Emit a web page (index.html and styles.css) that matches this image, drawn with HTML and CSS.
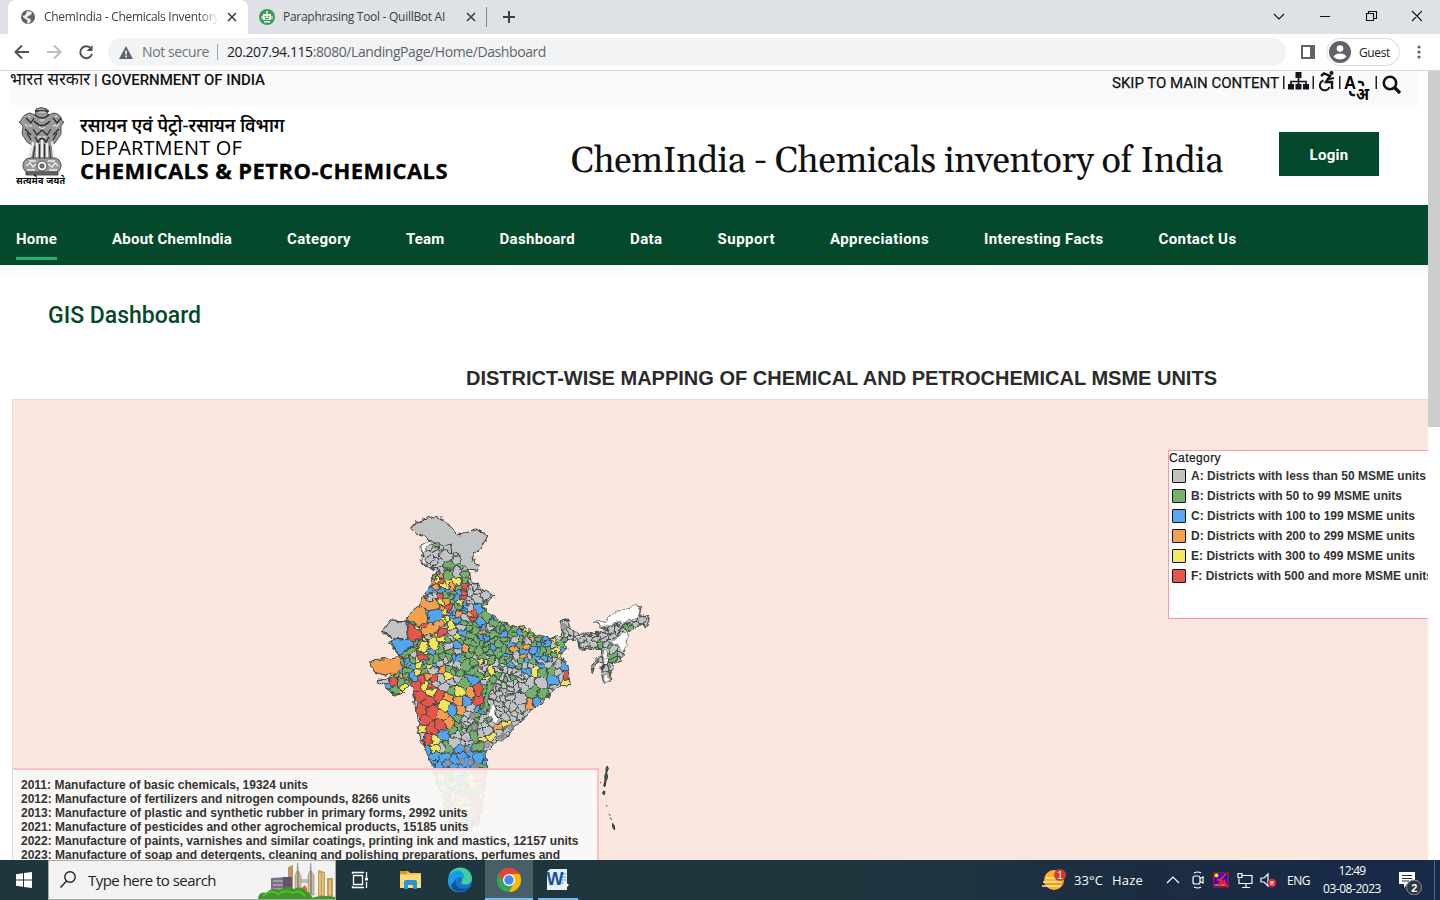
FILE: index.html
```html
<!DOCTYPE html>
<html lang="en">
<head>
<meta charset="utf-8">
<title>ChemIndia - Chemicals Inventory</title>
<link rel="stylesheet" href="styles.css">
</head>
<body>
<div class="window">
  <div class="tabs">
    <div class="tab active">
      <svg class="fav" width="16" height="16" viewBox="0 0 16 16"><circle cx="8" cy="8" r="7" fill="#5f6368"/><path d="M7 2l5 1-1 3-3 1-1 2 3 .5 1 2-2 3-2-.3.5-3L4 9 2 6.500l2 .5 2-2z" fill="#fff" opacity=".9"/></svg>
      <span class="fade" data-w="175">ChemIndia - Chemicals Inventory</span>
      <svg class="close" width="10" height="10" viewBox="0 0 10 10"><path d="M1 1l8 8M9 1l-8 8" stroke="#3c4043" stroke-width="1.600"/></svg>
    </div>
    <div class="tab">
      <svg class="fav" width="16" height="16" viewBox="0 0 16 16"><circle cx="8" cy="8" r="8" fill="#3f9a55"/><path d="M7.300 2h1.400v3H7.300zM4 5h8v6H4zM2.500 7h1v3h-1zM12.500 7h1v3h-1zM5 12h6v1.500H5z" fill="#fff"/><path d="M5.500 7.500h1.800M8.700 7.500h1.800M6 9.700h4" stroke="#3f9a55" stroke-width="1.300"/></svg>
      <span data-w="162">Paraphrasing Tool - QuillBot AI</span>
      <svg class="close" width="10" height="10" viewBox="0 0 10 10"><path d="M1 1l8 8M9 1l-8 8" stroke="#3c4043" stroke-width="1.600"/></svg>
    </div>
    <i class="tabsep"></i>
    <svg class="plus" width="12" height="12" viewBox="0 0 12 12"><path d="M6 0v12M0 6h12" stroke="#3c4043" stroke-width="2"/></svg>
    <svg class="winctl" width="150" height="14" viewBox="1272 8 150 14" fill="none" stroke="#111" stroke-width="1.100"><path d="M1274 12l5 5 5-5M1320 14.500h10M1366.500 11.500h7v7h-7zM1368.500 11.500v-2h8v7h-3M1412 9l10 10M1422 9l-10 10"/></svg>
  </div>
  <div class="toolbar">
    <svg width="100" height="24" viewBox="0 40 100 24" fill="none" stroke="#505458" stroke-width="2"><path d="M29 52H16M22 45.500L15.500 52l6.500 6.500"/><path d="M47 52h13M54 45.500l6.500 6.500-6.500 6.500" stroke="#bcbec1"/><path d="M91 48.500A6 6 0 1 0 92 54"/><path d="M92.500 45v6h-6z" fill="#505458" stroke="none"/></svg>
    <div class="omni">
      <svg width="14" height="13" viewBox="0 0 14 13"><path d="M7 0l7 13H0z" fill="#5f6368"/><path d="M7 4.500v4M7 9.500v2" stroke="#fff" stroke-width="1.500"/></svg>
      <span class="notsec" data-w="67">Not secure</span><i></i>
      <span class="url" data-w="319"><b>20.207.94.115</b>:8080/LandingPage/Home/Dashboard</span>
    </div>
    <svg class="side" width="14" height="14" viewBox="0 0 14 14"><path d="M1 1h12v12H1z" fill="#fff" stroke="#5f6368" stroke-width="2"/><path d="M9 0h5v14H9z" fill="#5f6368"/></svg>
    <div class="guest"><svg width="22" height="22" viewBox="0 0 22 22"><circle cx="11" cy="11" r="11" fill="#5f6368"/><circle cx="11" cy="7.500" r="3.300" fill="#fff"/><path d="M4.500 15.500c2-4 11-4 13 0-3 4-10 4-13 0z" fill="#fff"/></svg><span data-w="31">Guest</span></div>
    <svg class="dots" width="4" height="14" viewBox="0 0 4 14" fill="#5f6368"><circle cx="2" cy="2" r="1.600"/><circle cx="2" cy="7" r="1.600"/><circle cx="2" cy="12" r="1.600"/></svg>
  </div>
  <div class="viewport">
    <div class="page">
      <div class="govbar">
        <span class="gov"><span class="hi">भारत सरकार</span><span data-w="171">| GOVERNMENT OF INDIA</span></span>
        <span class="skip" data-w="167">SKIP TO MAIN CONTENT</span>
        <svg class="tools" width="122" height="34" viewBox="1280 71 122 34">
          <g fill="#222"><path d="M1283 76h1.500v13h-1.500zM1312.500 76h1.500v13h-1.500zM1339 76h1.500v13h-1.500zM1375.500 76h1.500v13h-1.500z"/></g>
          <g fill="#151522"><path d="M1295.500 72h6v6h-6zM1288 84h6v5.500h-6zM1295.500 84h6v5.500h-6zM1303 84h6v5.500h-6z"/><path d="M1291 85v-3.500h15V85M1298.500 78v7" fill="none" stroke="#151522" stroke-width="1.700"/></g>
          <g fill="none" stroke="#151522" stroke-width="2"><path d="M1321 76l3-2.500 6 2.500-4 6h6v7" stroke-width="2.400"/><path d="M1323.500 80.500a5 5 0 1 0 6 6.500M1329 79l5-1"/><circle cx="1331.500" cy="73" r="2" fill="#151522" stroke="none"/></g>
          <text x="1344" y="89" class="tra" textLength="12" lengthAdjust="spacingAndGlyphs">A</text><text x="1356" y="100" class="trh" textLength="13" lengthAdjust="spacingAndGlyphs">अ</text>
          <path d="M1358 82q6-1 5 4M1350 91q0 5 5 4" fill="none" stroke="#111" stroke-width="2.400"/>
          <circle cx="1390" cy="83" r="6.200" fill="none" stroke="#111" stroke-width="2.600"/><path d="M1394.500 87.500l5.500 5.500" stroke="#111" stroke-width="3.200"/>
        </svg>
      </div>
      <header class="brand">
        <svg class="emblem" width="54" height="82" viewBox="0 0 54 82">
          <g fill="#9a9a9a" stroke="#444" stroke-width=".9">
            <path d="M6 15q2-7 9-8l5 2 1-6q5-3 11 0l1 6 6-2q7 1 8 8l2 1-3 4 0 8-6 9-4 2 3 15H14l3-15-5-3-5-8 1-8-4-4z"/>
            <path d="M18 36l-3 16M22 37v15M27 34v18M32 37v15M37 36l2 16" stroke="#eee" stroke-width="2.200"/>
            <path d="M20 40l-2 12M24.500 38v14M29.500 38v14M34.500 40l1 12" stroke="#333" stroke-width="1.200"/>
            <path d="M20 5h14M20 9q7 6 14 0M19 15q8 9 16 0M11 12l5 5 3-5M38 12l4 5 4-5M10 23l6 6M44 23l-6 6M18 23l4 6 5-5 5 5 4-6M22 17l2 2m8-2l-2 2M12 27l4 7M42 27l-4 7M20 31l3 5 4-5 4 5 3-5" fill="none" stroke="#2a2a2a" stroke-width="1.300"/>
            <path d="M13 10l2 1m25 0l2-1M24 6h6M25 14h4M14 19l3 1m21 0l3-1M23 31h8M10 18l3 3m28 0l3-3M24 21l3 2 3-2" stroke="#fff" fill="none"/>
            <rect x="8" y="52" width="38" height="15" rx="7"/><path d="M11 66h32v3H11z" fill="#666"/>
            <circle cx="27" cy="60" r="5" fill="#eee"/><circle cx="27" cy="60" r="2" fill="#777"/><path d="M11 60l4-3 3 4 3-3m12 0l4 3 3-4 3 3M12 64h8m14 0h8M14 55h7m12 0h7" fill="none" stroke="#eee" stroke-width="1.300"/>
          </g>
          <text x="1" y="78" class="motto" textLength="49">सत्यमेव जयते</text>
        </svg>
        <div class="dept"><div class="d1">रसायन एवं पेट्रो-रसायन विभाग</div><div class="d2"><span data-w="162">DEPARTMENT OF</span></div><div class="d3"><span data-w="368">CHEMICALS &amp; PETRO-CHEMICALS</span></div></div>
        <div class="title"><span data-w="652">ChemIndia - Chemicals inventory of India</span></div>
        <div class="login"><span data-w="39">Login</span></div>
      </header>
      <nav class="nav"><span class="on" data-w="41">Home</span><span data-w="120">About ChemIndia</span><span data-w="64">Category</span><span data-w="38.500">Team</span><span data-w="75.500">Dashboard</span><span data-w="32.500">Data</span><span data-w="57.500">Support</span><span data-w="99">Appreciations</span><span data-w="119.500">Interesting Facts</span><span data-w="78">Contact Us</span></nav>
      <h2 class="gis"><span data-w="153">GIS Dashboard</span></h2>
      <h3 class="maptitle"><span data-w="751">DISTRICT-WISE MAPPING OF CHEMICAL AND PETROCHEMICAL MSME UNITS</span></h3>
      <div class="mapbox">
        <svg class="map" id="map" width="300" height="360" viewBox="-15 -15 900 1080"></svg>
        <div class="legend">
          <div class="cat"><span data-w="52">Category</span></div>
          <div class="row"><i class="a"></i><span data-w="235">A: Districts with less than 50 MSME units</span></div>
          <div class="row"><i class="b"></i><span data-w="211">B: Districts with 50 to 99 MSME units</span></div>
          <div class="row"><i class="c"></i><span data-w="224">C: Districts with 100 to 199 MSME units</span></div>
          <div class="row"><i class="d"></i><span data-w="224">D: Districts with 200 to 299 MSME units</span></div>
          <div class="row"><i class="e"></i><span data-w="224">E: Districts with 300 to 499 MSME units</span></div>
          <div class="row"><i class="f"></i><span data-w="242">F: Districts with 500 and more MSME units</span></div>
        </div>
        <div class="info">
          <div><span data-w="287">2011: Manufacture of basic chemicals, 19324 units</span></div>
          <div><span data-w="389.500">2012: Manufacture of fertilizers and nitrogen compounds, 8266 units</span></div>
          <div><span data-w="446.500">2013: Manufacture of plastic and synthetic rubber in primary forms, 2992 units</span></div>
          <div><span data-w="447.500">2021: Manufacture of pesticides and other agrochemical products, 15185 units</span></div>
          <div><span data-w="557.500">2022: Manufacture of paints, varnishes and similar coatings, printing ink and mastics, 12157 units</span></div>
          <div><span data-w="539">2023: Manufacture of soap and detergents, cleaning and polishing preparations, perfumes and</span></div>
        </div>
      </div>
    </div>
    <div class="scroll"><div></div></div>
  </div>
  <div class="taskbar">
    <div class="start"><svg width="16" height="16" viewBox="0 0 16 16" fill="#fff"><path d="M0 2.300l7-1v6.200H0zM8 1.100L16 0v7.500H8zM0 8.500h7v6.200l-7-1zM8 8.500h8V16l-8-1.100z"/></svg></div>
    <div class="search">
      <svg width="16" height="18" viewBox="0 0 16 18" fill="none" stroke="#222" stroke-width="1.400"><circle cx="10" cy="6" r="5.200"/><path d="M6.500 10L.5 16.500"/></svg>
      <span data-w="128">Type here to search</span>
      <svg class="city" width="78" height="38" viewBox="0 0 78 38">
        <path d="M13 17l17-1v20H13z" fill="#777080"/><path d="M15 20h13M15 24h13M15 28h13" stroke="#b5a6af" stroke-width="1.500"/><path d="M30 6l5-2v30h-5z" fill="#bd9562"/><path d="M25 16h9v18h-9z" fill="#655268"/>
        <path d="M37 34V15l2-5 .7-8 .7 8 2.600 5v19zM50 34V15l2-5 .7-8 .7 8 2.600 5v19z" fill="#c8bda5" stroke="#8d8272" stroke-width=".6"/><path d="M40 10v23M53 10v23" stroke="#776d67" stroke-width="1.200"/><path d="M43 19h7M43 21h7" stroke="#8d8985" fill="none"/>
        <path d="M60 9l7 2v25h-7zM69 17h6v20h-6z" fill="#c99f55"/><path d="M62 12v22M65 12v22M72 19v15" stroke="#fae0a0"/><path d="M44 27l2.500-3 2.500 3v8h-5z" fill="#e36631"/>
        <path d="M0 38q1-8 8-6 6-6 14-3 7-6 14-1 8-4 12 3 3-1 5 3l2 4z" fill="#399a24"/><path d="M50 38q12-5 27-2v2z" fill="#399a24"/><path d="M5 35q8-7 15-2 8-5 15-1 7-4 12 3" stroke="#5fb43a" stroke-width="2" fill="none"/>
      </svg>
    </div>
    <svg class="apps" width="242" height="40" viewBox="336 0 242 40">
      <g fill="none" stroke="#fff" stroke-width="1.300"><path d="M353.500 15.500h9v9h-9zM352.500 14v-2M352 12.500h12M352.500 28v-2M352 27.500h12M366.500 12v5M366.500 22v6"/><path d="M365 17.500h3v3h-3z" fill="#fff" stroke="none"/></g>
      <path d="M400 11h8l2 2h11v15h-21z" fill="#f7c64a"/><path d="M400 11h7v3h-7z" fill="#d99b1c"/><path d="M400 15h21v13h-21z" fill="#ffd97a"/><path d="M404 29v-7q0-2 2-2h9q2 0 2 2v7h-4v-4h-5v4z" fill="#2c94dc"/>
      <circle cx="460" cy="20" r="12" fill="#1577cc"/><path d="M449 16c2-11 21-12 23 2 0 7-8 8-11 5 5-7-4-11-12-7z" fill="#42cfa0"/><path d="M449 16c5-9 17-6 15 3-5-5-10 0-8 6 2 4 8 6 13 2-6 9-22 6-21-7z" fill="#1b9be1"/><path d="M456 19c-2 8 5 12 13 8-5 7-17 6-18-2z" fill="#124f9c"/>
      <path d="M485 0h48v40h-48z" fill="#495e67"/><path d="M485 38h48v2h-48zM538 38h40v2h-40z" fill="#76b9ed"/>
      <circle cx="509" cy="20" r="12" fill="#34a853"/><path d="M509 14h10.400A12 12 0 0 1 509 32l5-9z" fill="#fbbc05"/><path d="M498.600 14A12 12 0 0 1 519.400 14H509a6 6 0 0 0-5 9z" fill="#ea4335"/><circle cx="509" cy="20" r="6" fill="#fff"/><circle cx="509" cy="20" r="4.700" fill="#4285f4"/>
      <path d="M550 9h17v21h-20V12z" fill="#e8f0fc"/><path d="M561 14h5M561 17h5M561 20h5M561 23h5" stroke="#5b8fd8"/><path d="M563 20l6 5-4 4z" fill="#fff"/><text x="546.500" y="25" class="word" textLength="17">W</text>
    </svg>
    <div class="tray">
      <svg width="26" height="22" viewBox="0 0 26 22"><circle cx="13" cy="11" r="10" fill="#ffb321"/><path d="M3 14h18l-2 4H6z" fill="#f09a1a"/><path d="M2 13h18M1 17h19M5 9h10" stroke="#ffe9b4" stroke-width="1.700"/><circle cx="19" cy="6" r="6" fill="#d13b2b"/><text x="16.300" y="9.500" class="one">1</text></svg>
      <span class="temp" data-w="29">33°C</span><span class="haze" data-w="31">Haze</span>
      <svg class="ti" width="110" height="22" viewBox="1166 869 110 22" fill="none" stroke="#fff" stroke-width="1.200"><path d="M1167 883l6-6 6 6"/><rect x="1193" y="876" width="7" height="8" rx="2"/><path d="M1200 878.500l3-1.500v6l-3-1.500M1194 873q4-2 7 0M1194 887q4 2 7 0"/><path d="M1214 873h14v14h-14z" fill="#10e" stroke="#e11"/><path d="M1215 884h12v2h-12z" fill="#888" stroke="none"/><circle cx="1216.500" cy="875.500" r="2" fill="#fe0" stroke="none"/><path d="M1226 874l-5 5-4 1 5 1-4 4 5-2 3 2-2-5" stroke="#f22" stroke-width="2"/><path d="M1241 875.500h11v8h-13v-5M1246 884v3M1242 887.500h8M1238 873.500h4v4h-4z"/><path d="M1261 878h3l4-4v12l-4-4h-3z"/><circle cx="1272" cy="883" r="4.300" fill="#db2f3e" stroke="none"/><path d="M1270.500 881.500l3 3m0-3l-3 3"/></svg>
      <span class="eng" data-w="23">ENG</span>
      <div class="clock"><span data-w="27">12:49</span><br><span data-w="58">03-08-2023</span></div>
      <svg class="note" width="26" height="26" viewBox="0 0 26 26"><path d="M1 3h16v12H9l-3 4v-4H1z" fill="#fff"/><path d="M4 6.500h10M4 9.500h10M4 12h7" stroke="#1b2d40"/><circle cx="16" cy="18.500" r="7.500" fill="#2f3740" stroke="#8d959b"/><text x="13.200" y="23" class="two">2</text></svg>
      <i class="peek"></i>
    </div>
  </div>
</div>
<script src="map.js"></script>
</body>
</html>
```
FILE: styles.css
```css
*{box-sizing:border-box}
body{margin:0;font-family:"Liberation Sans",Arial,sans-serif;color:#222}
svg{flex:none;display:block}
span{white-space:nowrap}
.window{width:1440px;height:900px;display:flex;flex-direction:column;overflow:hidden;background:#fff}
.tabs{height:34px;background:#dee1e6;display:flex;align-items:center;flex:none;font:12px/34px "Open Sans",sans-serif;color:#3c4043;padding-left:8px}
.tab{display:flex;align-items:center;height:34px;width:240px;padding-left:12px}
.tab.active{background:#fff;border-radius:8px 8px 0 0}
.fav{margin-right:8px}
.tab:not(.active) .fav{margin-left:-1px}
.fade{-webkit-mask-image:linear-gradient(90deg,#000 88%,transparent);mask-image:linear-gradient(90deg,#000 88%,transparent)}
.close{margin-left:auto;margin-right:11px}
.tab:not(.active) .close{margin-right:12px}
.tabsep{width:1px;height:20px;background:#808388;margin-left:-2px}
.plus{margin-left:16px}
.winctl{margin-left:auto;margin-right:18px}
.toolbar{height:37px;flex:none;display:flex;align-items:center;border-bottom:1px solid #d4d6d9;font-family:"Open Sans",sans-serif}
.omni{margin-left:8px;width:1178px;height:28px;border-radius:14px;background:#f1f3f4;display:flex;align-items:center;padding-left:11px;font-size:14px;line-height:28px;color:#5f6368}
.omni span{height:28px}
.omni b{font-weight:400;color:#202124}
.omni .notsec{margin-left:9px;color:#707478}
.omni i{width:1px;height:16px;background:#9aa0a6;margin:0 9px 0 8px}
.side{margin-left:15px}
.guest{margin-left:11px;width:74px;height:28px;border:1px solid #dadce0;border-radius:14px;display:flex;align-items:center;padding-left:2px;font-size:12px;gap:8px}
.dots{margin-left:17px}
.viewport{height:789px;flex:none;display:flex;overflow:hidden}
.page{width:1428px;overflow:hidden;font-family:Roboto,sans-serif}
.scroll{width:12px;background:#fff}
.scroll div{height:356px;background:#cdcdcd}
.govbar{margin:0 10px;height:34px;background:#f9f9f9;display:flex;align-items:flex-start;color:#111;font-weight:500;font-size:15px;line-height:18px}
.hi{font-family:"Noto Sans Devanagari","Noto Sans",sans-serif;font-weight:400;font-size:17px;line-height:20px;width:84px;height:20px}
.gov{width:1102px;display:flex}
.skip{padding-top:3px;width:168px;font-weight:400;-webkit-text-stroke:.25px #111}
.tra{font:bold 19px "Liberation Sans",sans-serif}
.trh{font:bold 17px "Noto Sans Devanagari","Noto Sans",sans-serif}
.brand{height:100px;display:flex;color:#111}
.emblem{margin:1px 0 0 15px}
.motto{font:bold 9px "Noto Sans Devanagari","Noto Sans",sans-serif}
.dept{margin-left:11px;width:490px;padding-top:9px;font-family:"Open Sans","Noto Sans",sans-serif;color:#000}
.d1{font-size:18.400px;line-height:22px;font-weight:500;-webkit-text-stroke:.2px #000}
.d2{font-size:20px;line-height:24px}
.d3{font-size:22px;line-height:20px;font-weight:700;-webkit-text-stroke:.3px #000}
.title{width:709px;font:36px/40px Gelasio,Georgia,serif;padding:37px 0 0 1px}
.login{margin-top:27px;width:100px;height:44px;background:#04492b;color:#fff;font-weight:700;font-size:15px;line-height:46px;text-align:center}
.nav{height:60px;background:#04492b;color:#fff;display:flex;gap:55px;padding:18px 16px 0;font-size:15px;font-weight:700;line-height:33px;box-shadow:0 5px 0 #f9fafa,0 7px 8px #00000008}
.nav span{height:37px}
.nav .on{border-bottom:3px solid #19b96b}
.gis{margin:32px 0 0 48px;font-size:23px;line-height:37px;height:36px;font-weight:500;color:#04492b}
.maptitle{margin:29px 0 0 466px;font:bold 20px/32px "Liberation Sans",sans-serif;height:37px;color:#2b2b2b}
.mapbox{margin-left:12px;width:1500px;height:480px;border:1px solid #dedede;background:#fae8e0;display:grid;grid-template-columns:1155px 1fr;grid-template-rows:480px;position:relative;font:bold 12px "Liberation Sans",sans-serif;color:#333}
.map{margin:101px 0 0 342px}
.legend{margin-top:50px;width:340px;height:169px;border:1px solid #ff98a2;background:#fff}
.cat{line-height:15px;height:15px;font-weight:400;color:#222;-webkit-text-stroke:.25px #222}
.row{display:flex;align-items:center;height:20px;padding-left:3px;gap:5px}
.row i{width:14px;height:14px;border:1px solid #111;border-radius:1px}
.a{background:#c2c3c1}.b{background:#79b16e}.c{background:#58a7ef}.d{background:#f5a04f}.e{background:#f3e661}.f{background:#e6564b}
.info{position:absolute;left:0;top:368px;width:586px;height:115px;border:solid #ffbfc2;border-width:2px 2px 0 0;background:rgba(250,250,247,.91);padding:8px;line-height:14px}
.taskbar{height:40px;flex:none;display:flex;background:linear-gradient(90deg,#1f363e,#20363f 60%,#1b2c42 80%,#18294a);font-family:"Open Sans",sans-serif;color:#fff;font-size:13px}
.start{width:48px;display:grid;place-items:center}
.search{width:288px;background:#f2f2f2;border:1px solid #aaa;display:flex;align-items:center;padding-left:11px;color:#222;font-size:15px;gap:12px}
.city{margin-left:auto;margin-right:-1px}
.tray{margin-left:auto;display:flex;align-items:center;width:399px}
.temp{margin-left:7px}.haze{margin-left:9px}
.ti{margin-left:23px}.eng{font-size:12px;margin-left:11px}
.clock{font-size:12px;line-height:18px;text-align:center;margin-left:13px;width:58px}
.note{margin-left:17px;margin-top:4px}
.peek{width:1px;height:40px;background:#5d6a78;margin-left:10px}
.one{font:10px sans-serif;fill:#fff}.two{font:bold 11px "Liberation Sans",sans-serif;fill:#fff}.word{font:bold 18px "Liberation Sans",sans-serif;fill:#17519f}
```
FILE: map.js
```javascript
// Spread each label's characters over its column width.
document.querySelectorAll('[data-w]').forEach(e => {
  const w = +e.dataset.w, range = document.createRange();
  range.selectNodeContents(e);
  const n = e.textContent.length, nat = range.getBoundingClientRect().width;
  e.style.letterSpacing = ((w - nat) / n) + 'px';
});

const P = {A:'#c2c3c5',B:'#73b06c',C:'#54a5ee',D:'#f5a04f',E:'#f3e65f',F:'#e6564b',W:'#fffdfb'};
let s = 7321;
const rnd = () => (s = (s * 16807) % 2147483647) / 2147483647;

const land = [[152,70],[165,52],[190,42],[218,35],[250,47],[275,75],[300,93],[345,72],[380,92],[362,128],[335,148],[340,170],[355,185],[348,198],[325,195],[330,228],[345,238],[375,256],[398,268],[382,298],[365,300],[375,322],[400,335],[430,352],[465,365],[490,362],[510,382],[550,395],[602,392],[600,348],[620,342],[626,372],[660,385],[710,382],[745,375],[715,367],[700,352],[730,348],[750,330],[780,315],[810,305],[828,298],[842,310],[835,325],[865,340],[855,370],[845,360],[820,370],[802,385],[798,420],[785,440],[780,470],[765,475],[755,470],[750,505],[745,532],[728,532],[722,505],[725,475],[710,470],[695,503],[688,485],[692,475],[720,450],[725,430],[655,432],[650,410],[618,403],[610,420],[625,430],[605,440],[600,455],[615,470],[622,500],[628,542],[605,542],[580,550],[565,570],[545,595],[510,615],[490,640],[460,665],[435,700],[400,715],[375,735],[378,795],[365,918],[346,962],[297,999],[273,968],[237,858],[215,790],[205,760],[180,710],[165,625],[160,575],[150,535],[145,515],[143,545],[130,560],[105,573],[80,555],[55,530],[52,522],[75,524],[92,512],[105,505],[70,510],[40,500],[28,477],[45,463],[105,460],[115,450],[85,415],[100,400],[75,392],[65,380],[90,345],[135,348],[140,330],[175,300],[185,275],[195,275],[195,260],[212,240],[212,215],[235,200],[210,190],[185,180],[180,120],[205,108],[185,95],[165,80]];

// Districts large enough to carry their own outline.
const shapes = [
  ['A',[[152,70],[165,52],[190,42],[218,35],[250,47],[275,75],[300,93],[345,72],[380,92],[362,128],[335,148],[340,170],[355,185],[348,198],[325,195],[302,180],[296,150],[272,142],[270,118],[245,122],[210,105],[185,95],[165,80]]],
  ['W',[[182,120],[205,108],[208,116],[194,130],[190,140],[181,138]]],
  ['W',[[184,155],[192,158],[200,178],[188,176]]],
  ['D',[[175,300],[190,312],[200,340],[198,352],[175,362],[160,352],[138,348],[140,330],[160,312]]],
  ['D',[[185,275],[205,288],[225,280],[238,305],[222,318],[202,316],[190,312],[175,300]]],
  ['C',[[202,318],[238,312],[250,330],[238,345],[218,358],[198,352]]],
  ['D',[[198,358],[218,358],[240,345],[252,355],[228,372],[215,392],[190,392],[178,376]]],
  ['F',[[138,360],[155,358],[178,376],[186,392],[180,405],[150,408],[138,392]]],
  ['F',[[228,380],[240,368],[258,374],[256,392],[228,394]]],
  ['A',[[65,380],[90,345],[135,350],[138,390],[140,404],[118,400],[92,402],[88,392]]],
  ['C',[[85,408],[130,400],[158,408],[158,425],[142,430],[122,450],[110,448],[100,425]]],
  ['E',[[200,405],[215,390],[228,405],[236,430],[220,435],[202,422]]],
  ['E',[[165,438],[180,412],[200,410],[202,432],[190,440]]],
  ['E',[[262,348],[278,342],[282,365],[270,375],[258,368]]],
  ['D',[[28,477],[45,463],[105,460],[115,450],[122,488],[105,503],[70,510],[40,500]]],
  ['B',[[118,452],[150,430],[168,432],[150,450],[122,456]]],
  ['F',[[170,450],[188,443],[203,460],[190,470],[174,470]]],
  ['B',[[370,580],[376,560],[372,545],[392,525],[398,545],[385,575],[382,605],[374,630],[364,612]]],
  ['B',[[336,710],[368,712],[372,740],[335,740]]],
  ['W',[[385,608],[400,598],[402,625],[412,640],[402,655],[395,640],[381,630]]],
  ['W',[[700,352],[730,348],[750,330],[780,315],[810,305],[828,298],[838,310],[832,325],[835,340],[808,345],[788,358],[770,348],[750,358],[725,365]]],
  ['W',[[760,400],[785,385],[800,378],[798,420],[783,440],[768,420],[745,415]]],
  ['W',[[728,435],[740,440],[742,460],[728,470]]],
  ['W',[[728,505],[744,505],[742,532],[730,532]]]
];

// District centres: x, y, category, clearance.
const big = `243 380 F 15,216 403 E 16,213 440 C 18,118 530 B 19,100 530 F 14,80 545 C 18,105 556 B 18,132 545 E 14,70 527 A 14,165 545 F 23,210 562 E 19,172 575 F 22,200 590 F 30,235 570 F 28,180 615 F 27,215 620 F 28,190 650 F 26,240 660 F 24,210 670 F 24,200 703 F 22,262 580 D 21,290 590 D 21,245 628 D 22,265 655 D 22,300 620 D 20,252 602 E 16,295 555 E 20,330 565 D 18,350 553 F 18,350 590 F 22,350 725 B 25,280 675 B 18,320 590 C 20,275 615 C 16,250 690 C 22,300 730 C 23,328 732 C 17,355 760 C 22,320 775 C 19,280 765 C 19,250 755 C 19,232 785 C 18,200 740 C 15,180 675 E 16,220 710 E 18,225 728 E 14,365 705 E 17,390 695 E 16,438 655 E 17,410 665 D 16,270 530 A 20,310 535 B 20,335 525 C 18,245 490 D 15,255 155 A 25,290 205 A 24,260 210 B 18,375 270 A 22,345 280 A 22,375 335 B 22,350 310 C 18,270 357 E 17,450 350 A 15,505 600 D 18,530 595 C 16,550 568 B 18,515 560 B 20,540 530 A 27,505 530 A 22,480 585 A 23,578 525 C 18,610 485 C 19,620 510 F 12,612 533 E 16,522 493 E 16,575 495 B 18,605 365 A 14,732 450 B 12,698 485 B 14,798 365 B 10`.split(',').map(q => { const [x,y,c,r] = q.trim().split(' '); return {x:+x,y:+y,c,r:+r}; });

function pick(x, y) {
  let t;
  if (x > 595 && y < 400) t = 'A';
  else if (x > 630) t = y > 455 ? 'WAAAAB' : 'AAAAAAAAB';
  else if (y < 200) t = 'AAABAA';
  else if (x > 318 && y < 300) t = 'A';
  else if (y < 345 && x < 340) t = 'BBCCEEDDFABC';
  else if (y < 460 && x > 300) t = x > 480 ? 'BBCCDAEBDA' : 'BBBBBACBCADB';
  else if (x < 245 && y < 600) t = 'CBBEADCBAF';
  else if (y < 540 && x < 400) t = 'AABBABCBAAE';
  else if (x > 400 && y < 530) t = 'AAAABABAAC';
  else if (y > 735) t = y < 800 ? 'CCCBCCD' : 'CCEDFFEB';
  else if (x > 380) t = 'AAAAAAAAAB';
  else t = 'AAABAAACAB';
  return t[Math.floor(rnd() * t.length)];
}
const sites = big.map(b => [b.x, b.y, b.c]);
for (let y = 100; y < 1010; y += 16) for (let x = 20; x < 880; x += 17) {
  const px = x + rnd() * 16 - 8, py = y + rnd() * 15 - 7;
  if (big.some(b => Math.hypot(b.x - px, b.y - py) < b.r)) continue;
  if (py > 210 && px < 345 && py < 345 || rnd() > .14) sites.push([px, py, pick(px, py)]);
}
function cell(i) {
  const [x, y] = sites[i];
  let p = [[x-55,y-55],[x+55,y-55],[x+55,y+55],[x-55,y+55]];
  for (let j = 0; j < sites.length; j++) {
    if (j === i) continue;
    const a = sites[j][0] - x, b = sites[j][1] - y;
    if (Math.abs(a) > 110 || Math.abs(b) > 110) continue;
    const k = (a*a + b*b) / 2, f = q => (q[0]-x)*a + (q[1]-y)*b - k, out = [];
    for (let n = 0; n < p.length; n++) {
      const u = p[n], v = p[(n+1) % p.length], fu = f(u), fv = f(v);
      if (fu <= 0) out.push(u);
      if (fu * fv < 0) { const t = fu / (fu - fv); out.push([u[0]+t*(v[0]-u[0]), u[1]+t*(v[1]-u[1])]); }
    }
    p = out;
  }
  return p;
}
const str = p => p.map(q => q[0].toFixed(1) + ',' + q[1].toFixed(1)).join(' ');
let h = '<defs><clipPath id="land"><polygon points="' + str(land) + '"/></clipPath><filter id="rough" x="-5%" y="-5%" width="110%" height="110%"><feTurbulence type="fractalNoise" baseFrequency=".05" numOctaves="2" seed="4"/><feDisplacementMap in="SourceGraphic" scale="20" xChannelSelector="R" yChannelSelector="G"/></filter></defs><g transform="translate(3 -3)"><g filter="url(#rough)" stroke="#3f4644" stroke-width="3" stroke-linejoin="round"><g clip-path="url(#land)">';
sites.forEach((q, i) => { const p = cell(i); if (p.length) h += `<polygon points="${str(p)}" fill="${P[q[2]]}"/>`; });
h += `</g><polygon points="${str(land)}" fill="none"/>`;
shapes.forEach(([c, p]) => h += `<polygon points="${str(p)}" fill="${P[c]}"${c === 'W' ? ' stroke="#8d8d8b"' : ''}/>`);
h += '</g></g>';
[[452,663],[431,690],[423,697],[380,717],[343,663],[337,630],[322,730],[305,765],[330,770],[350,778],[265,770],[611,362]].forEach(q => h += `<circle cx="${q[0]}" cy="${q[1]}" r="9" fill="#999" fill-opacity=".75" stroke="#777" stroke-width="2"/>`);
h += '<path d="M738 788l4-8 3 8-5 12 3 14-5 12-3 16-4-3 4-16-1-14 4-8zM730 855l5 2-2 9-5-3zM720 830h3M738 898l4 3M746 925l5 3M750 935l5 6M758 952l5 8 1 12-6-8z" fill="#586158" stroke="#333" stroke-width="3"/>';
document.getElementById('map').innerHTML = h;
```
